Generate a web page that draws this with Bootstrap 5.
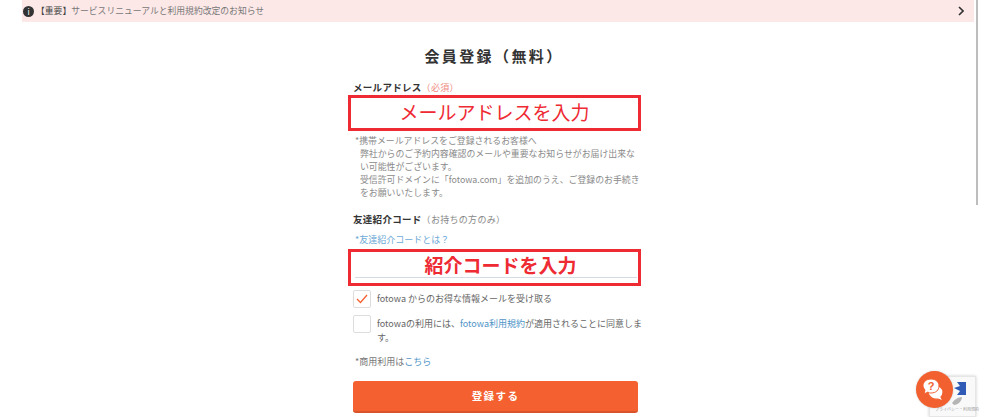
<!DOCTYPE html>
<html lang="ja">
<head>
    <meta charset="UTF-8">
    <meta name="viewport" content="width=device-width, initial-scale=1.0">
    <title>会員登録</title>
    <link href="https://cdn.jsdelivr.net/npm/bootstrap@5.3.3/dist/css/bootstrap.min.css" rel="stylesheet">
    <style>
        html, body { height: 417px; overflow: hidden; }
        body { font-family: "Noto Sans CJK JP", "Liberation Sans", sans-serif; color: #555; background: #fff; }
        .notice-bar { margin: 0 26px 0 22px; height: 22px; padding: 0 10px 0 1px; background: #fde8e8; font-size: 8.8px; color: #777; }
        .notice-bar b { font-weight: 400; color: #444; }
        .info-dot { width: 11px; height: 11px; border-radius: 50%; background: #333; color: #fff; font-size: 8px; line-height: 11px; text-align: center; margin-right: 2px; }
        .page-title { margin: 24px 0 0 -12px; height: 20px; font-size: 15px; line-height: 20px; font-weight: 700; letter-spacing: 2.4px; color: #333; text-align: center; }
        .form-col { width: 285px; margin: 0 0 0 353px; }
        .field-label { margin-top: 13px; height: 16px; font-size: 9.5px; line-height: 16px; font-weight: 700; color: #333; letter-spacing: .3px; }
        .field-label span { font-weight: 400; font-size: 9px; }
        .req { color: #f08a80; }
        .opt { color: #888; }
        .red-box { margin: 0 -3px 0 -5px; border: 3.5px solid #ee2a33; background: #fff; color: #ee2a33; text-align: center; font-size: 19px; }
        .box-mail { height: 36px; line-height: 28px; }
        .box-code { height: 37px; line-height: 26px; font-weight: 700; margin-top: 2px; }
        .box-code::after { content: ""; display: block; border-bottom: 1px solid #d5dbe3; margin: -1px 1px 0 4px; }
        .box-code div { height: 26px; padding-left: 12px; }
        .help-text { margin: 3px -4px 0 2px; font-size: 8.9px; line-height: 13px; color: #8a8a8a; }
        .help-text div { padding-left: 5px; }
        .help-text .first { padding-left: 0; }
        .code-label { margin-top: 12px; }
        .code-link { margin: 6px 0 0 2px; height: 14px; font-size: 9px; line-height: 14px; color: #6ea9d6; }
        .tick-row { font-size: 9px; line-height: 14px; color: #666; }
        .tick-box { flex: 0 0 18px; width: 18px; height: 18px; border: 1px solid #ddd; border-radius: 2px; background: #fff; }
        .tick-row a, .biz-line a { color: #4f94c8; text-decoration: none; }
        .tick-one { margin-top: 4px; align-items: center; gap: 6px; }
        .tick-two { margin-top: 7px; gap: 6px; }
        .tick-two p { margin: 0 -5px 0 0; padding-top: 2px; }
        .biz-line { margin: 10px 0 0 2px; height: 14px; font-size: 9px; line-height: 14px; color: #777; }
        .join-btn { width: 285px; height: 32px; margin-top: 12px; padding: 0; background: #f46030; border: 0; border-bottom: 2px solid #d9542a; border-radius: 3px; color: #fff; font-size: 10.5px; font-weight: 700; letter-spacing: 1.4px; }
        .join-btn:hover { background: #f46030; color: #fff; }
        .side-scroll { position: absolute; left: 976px; top: 0; width: 2px; height: 205px; background: #bdbdbd; }
        .captcha-badge { position: absolute; left: 929px; top: 376px; width: 47px; height: 41px; background: #f9f9f9; border: 1px solid #e6e6e6; box-shadow: 0 0 3px rgba(0,0,0,.2); }
        .captcha-terms { position: absolute; left: 5px; top: 30px; font-size: 4px; line-height: 5px; color: #999; white-space: nowrap; }
        .chat-btn { position: absolute; left: 916px; top: 371px; width: 37px; height: 37px; border-radius: 50%; background: #f2602f; box-shadow: 0 0 2px rgba(0,0,0,.2); }
    </style>
</head>
<body>

<!-- お知らせ -->
<div class="notice-bar d-flex align-items-center">
    <span class="info-dot">i</span>
    <span class="flex-grow-1"><b>【重要】</b>サービスリニューアルと利用規約改定のお知らせ</span>
    <svg width="6" height="10" viewBox="0 0 6 10"><path d="M1 1l4 4-4 4" fill="none" stroke="#333" stroke-width="1.6"/></svg>
</div>

<h1 class="page-title">会員登録（無料）</h1>

<form class="form-col" onsubmit="return false">
    <div class="field-label">メールアドレス<span class="req">（必須）</span></div>
    <div class="red-box box-mail">メールアドレスを入力</div>
    <div class="help-text">
        <div class="first">*携帯メールアドレスをご登録されるお客様へ</div>
        <div>弊社からのご予約内容確認のメールや重要なお知らせがお届け出来ない可能性がございます。</div>
        <div>受信許可ドメインに「fotowa.com」を追加のうえ、ご登録のお手続きをお願いいたします。</div>
    </div>

    <div class="field-label code-label">友達紹介コード<span class="opt">（お持ちの方のみ）</span></div>
    <div class="code-link">*友達紹介コードとは？</div>
    <div class="red-box box-code"><div>紹介コードを入力</div></div>

    <div class="tick-row tick-one d-flex">
        <span class="tick-box d-flex align-items-center justify-content-center">
            <svg width="12" height="10" viewBox="0 0 12 10"><path d="M1 5l3.5 3.5L11 1" fill="none" stroke="#f46030" stroke-width="1.3"/></svg>
        </span>
        <span>fotowa からのお得な情報メールを受け取る</span>
    </div>
    <div class="tick-row tick-two d-flex">
        <span class="tick-box"></span>
        <p>fotowaの利用には、<a href="#">fotowa利用規約</a>が適用されることに同意します。</p>
    </div>

    <div class="biz-line">*商用利用は<a href="#">こちら</a></div>

    <button type="submit" class="btn join-btn d-block">登録する</button>
</form>

<div class="side-scroll"></div>

<div class="captcha-badge">
    <svg width="30" height="30" viewBox="0 0 30 30" class="d-block ms-2 mt-1">
        <path d="M19 1h9v13h-9l3-4-6-3 6-2z" fill="#2f5bb7"/>
        <path d="M14 22c2-3 6-6 10-6 0 4-4 8-8 8z" fill="#b5b5b5"/>
    </svg>
    <span class="captcha-terms">プライバシー・利用規約</span>
</div>
<div class="chat-btn">
    <svg width="37" height="37" viewBox="0 0 37 37">
        <path d="M18 14c5 0 9 3 9 7 0 2-1 4-2 5l2 4-5-2c-5 1-9-2-10-6z" fill="#fff" stroke="#f2602f" stroke-width="1.2"/>
        <path d="M15 8c5 0 8 3 8 7s-3 7-8 7c-1 0-2 0-3-1l-4 2 1-4c-1-1-2-3-2-4 0-4 3-7 8-7z" fill="#fff" stroke="#f2602f" stroke-width="1"/>
        <text x="15" y="19" text-anchor="middle" font-family="Liberation Sans, sans-serif" font-size="11" font-weight="700" fill="#f2602f">?</text>
    </svg>
</div>

<script src="https://cdn.jsdelivr.net/npm/bootstrap@5.3.3/dist/js/bootstrap.bundle.min.js"></script>
</body>
</html>
